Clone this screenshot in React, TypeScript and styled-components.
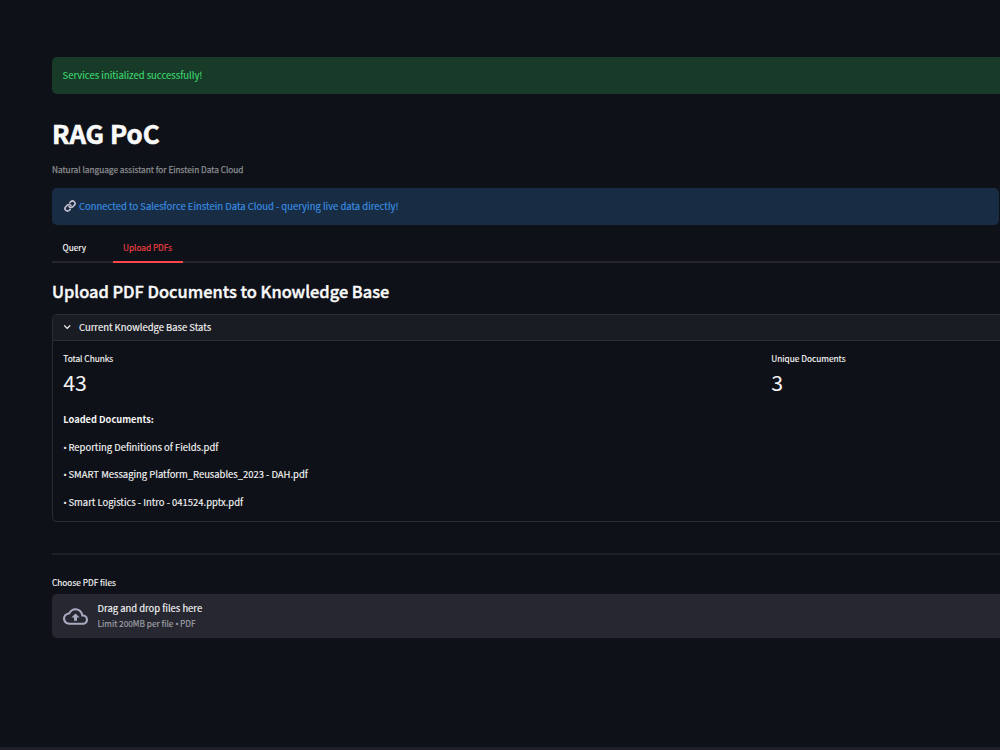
import React from "react";
import styled, { createGlobalStyle } from "styled-components";

const GlobalStyle = createGlobalStyle`
  * { box-sizing: border-box; }
  body {
    margin: 0;
    background: #0e1117;
    color: #fafafa;
    font-family: "Source Sans Pro", "Noto Sans CJK SC", "Noto Sans", sans-serif;
    overflow: hidden;
  }
`;

const Page = styled.div`
  display: flex;
  flex-direction: column;
  height: 750px;
  overflow: hidden;
`;

const Main = styled.main`
  flex: 1;
  padding: 57px 0 0 52px;
`;

const Text = styled.div<{ $size: number; $line: number; $weight?: number; $stroke?: number; $color?: string }>`
  margin: 0;
  font-size: ${(p) => p.$size}px;
  line-height: ${(p) => p.$line}px;
  height: ${(p) => p.$line}px;
  font-weight: ${(p) => p.$weight ?? 400};
  -webkit-text-stroke: ${(p) => p.$stroke ?? 0.15}px currentColor;
  color: ${(p) => p.$color ?? "#f4f4f5"};
  white-space: nowrap;
`;

const Bullet = styled.span<{ $width: number }>`
  display: inline-block;
  width: ${(p) => p.$width}px;
  font-family: "Open Sans", sans-serif;
  font-size: 9.5px;
  line-height: 1;
`;

const Alert = styled.div<{ $kind: "success" | "info" }>`
  display: flex;
  align-items: center;
  height: 37px;
  padding-left: ${(p) => (p.$kind === "info" ? 12 : 10.5)}px;
  padding-bottom: 1.5px;
  gap: 3px;
  margin-right: ${(p) => (p.$kind === "info" ? 1 : 0)}px;
  border-radius: ${(p) => (p.$kind === "info" ? "5px" : "5px 0 0 5px")};
  background: ${(p) => (p.$kind === "info" ? "#182d43" : "#183a29")};
`;

const Intro = styled.header`
  padding: 19px 0 12px;
  display: flex;
  flex-direction: column;
  gap: 9px;
`;

const Tabs = styled.nav`
  display: flex;
  height: 38px;
  border-bottom: 2px solid #25262b;
`;

const Tab = styled.div<{ $active?: boolean; $width: number }>`
  width: ${(p) => p.$width}px;
  height: 38px;
  padding: 13px 0 0 10.5px;
  border-bottom: ${(p) => (p.$active ? "2px solid #f9474b" : "none")};
  margin-right: ${(p) => (p.$active ? 0 : 15.5)}px;
`;

const Section = styled.section`
  padding-top: 13px;
`;

const Expander = styled.div`
  margin-top: 8px;
  height: 208px;
  border: 1px solid #2a2d34;
  border-right: 0;
  border-radius: 5px 0 0 5px;
  overflow: hidden;
`;

const Summary = styled.div`
  display: flex;
  align-items: center;
  gap: 8px;
  height: 26px;
  padding: 0 0 1px 10px;
  background: #1a1c23;
  border-bottom: 1px solid #2a2d34;
`;

const Metrics = styled.div`
  display: grid;
  grid-template-columns: 708px 1fr;
  padding: 9px 0 0 10.3px;
`;

const Documents = styled.div`
  display: flex;
  flex-direction: column;
  gap: 11.5px;
  padding: 14px 0 0 10.3px;
`;

const Divider = styled.hr`
  height: 2px;
  margin: 31px 0 19px;
  border: 0;
  background: #1e2127;
`;

const Dropzone = styled.div`
  display: flex;
  align-items: center;
  gap: 10px;
  height: 44px;
  margin-top: 4px;
  padding: 0 0 0 10.5px;
  border-radius: 5px 0 0 5px;
  background: #262730;
`;

const DropText = styled.div`
  padding-bottom: 2px;
`;

const BottomBar = styled.footer`
  height: 3px;
  background: #1f1e29;
`;

const LinkIcon = () => (
  <svg width="12" height="12" viewBox="0 0 24 24" fill="none" strokeLinecap="round" strokeLinejoin="round">
    <g stroke="#c9c2d2" strokeWidth="3.3">
      <path d="M10 13a5 5 0 0 0 7.54.54l3-3a5 5 0 0 0-7.07-7.07l-1.72 1.71" />
      <path d="M14 11a5 5 0 0 0-7.54-.54l-3 3a5 5 0 0 0 7.07 7.07l1.71-1.71" />
    </g>
  </svg>
);

const Chevron = () => (
  <svg width="8" height="8" viewBox="0 0 8 8" fill="none" stroke="#fafafa" strokeWidth="1.3">
    <path d="M1.2 2.4 4.2 5.4 7.2 2.4" />
  </svg>
);

const CloudUpload = () => (
  <svg width="25" height="25" viewBox="0 0 24 24" fill="#a9acc0">
    <path d="M19.35 10.04A7.49 7.49 0 0 0 12 4C9.11 4 6.6 5.64 5.35 8.04A5.994 5.994 0 0 0 0 14c0 3.31 2.69 6 6 6h13c2.76 0 5-2.24 5-5 0-2.64-2.05-4.78-4.65-4.96zM19 18H6c-2.21 0-4-1.79-4-4 0-2.05 1.53-3.76 3.56-3.97l1.07-.11.5-.95A5.469 5.469 0 0 1 12 6c2.62 0 4.88 1.86 5.39 4.43l.3 1.5 1.53.11A2.98 2.98 0 0 1 22 15c0 1.65-1.35 3-3 3zM8 13h2.55v3h2.9v-3H16l-4-4z" />
  </svg>
);

const documents = [
  "Reporting Definitions of Fields.pdf",
  "SMART Messaging Platform_Reusables_2023 - DAH.pdf",
  "Smart Logistics - Intro - 041524.pptx.pdf",
];

export default function App() {
  return (
    <Page>
      <GlobalStyle />
      <Main>
        <Alert $kind="success">
          <Text $size={9.48} $line={16} $color="#3dd56d">Services initialized successfully!</Text>
        </Alert>
        <Intro>
          <Text as="h1" $size={25.8} $line={40} $weight={700} $stroke={0.6} $color="#fafafa">RAG PoC</Text>
          <Text $size={8.28} $line={14} $stroke={0.25} $color="#8b8c90">Natural language assistant for Einstein Data Cloud</Text>
        </Intro>
        <Alert $kind="info">
          <LinkIcon />
          <Text $size={9.47} $line={16} $color="#3a8de4">
            Connected to Salesforce Einstein Data Cloud - querying live data directly!
          </Text>
        </Alert>
        <Tabs>
          <Tab $width={45}>
            <Text $size={8.3} $line={18}>Query</Text>
          </Tab>
          <Tab $width={70} $active>
            <Text $size={8.25} $line={18} $color="#ee3f43">Upload PDFs</Text>
          </Tab>
        </Tabs>
        <Section>
          <Text as="h2" $size={16.4} $line={30} $weight={500} $stroke={0.4} $color="#fafafa">Upload PDF Documents to Knowledge Base</Text>
          <Expander>
            <Summary>
              <Chevron />
              <Text $size={9.46} $line={16}>Current Knowledge Base Stats</Text>
            </Summary>
            <Metrics>
              <div>
                <Text $size={8.3} $line={16}>Total Chunks</Text>
                <Text $size={21.3} $line={31} $stroke={0}>43</Text>
              </div>
              <div>
                <Text $size={8.3} $line={16}>Unique Documents</Text>
                <Text $size={21.3} $line={31} $stroke={0}>3</Text>
              </div>
            </Metrics>
            <Documents>
              <Text $size={9.25} $line={16} $weight={700} $stroke={0}>Loaded Documents:</Text>
              {documents.map((name) => (
                <Text key={name} $size={9.45} $line={16}>
                  <Bullet $width={5.2}>•</Bullet>
                  {name}
                </Text>
              ))}
            </Documents>
          </Expander>
          <Divider />
          <Text $size={8.3} $line={16}>Choose PDF files</Text>
          <Dropzone>
            <CloudUpload />
            <DropText>
              <Text $size={9.45} $line={16}>Drag and drop files here</Text>
              <Text $size={8.25} $line={14} $color="#a0a1a8">
                Limit 200MB per file <Bullet $width={4.8}>•</Bullet>PDF
              </Text>
            </DropText>
          </Dropzone>
        </Section>
      </Main>
      <BottomBar />
    </Page>
  );
}
